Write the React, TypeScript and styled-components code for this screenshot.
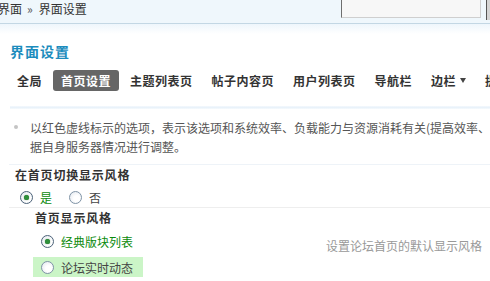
import React from "react";
import styled, { createGlobalStyle, css } from "styled-components";

const GlobalStyle = createGlobalStyle`
  html, body {
    margin: 0;
    padding: 0;
    background: #fff;
    overflow: hidden;
  }
  body {
    font-family: "Noto Sans CJK SC", "Liberation Sans", sans-serif;
    font-size: 12px;
    color: #333;
  }
`;

const Page = styled.div`
  width: 640px;
`;

const TopBar = styled.div`
  height: 23px;
  display: grid;
  grid-template-columns: 341px 140px 5px 1fr;
  background: #eff7fc;
  border-bottom: 1px solid #c3d7e4;
`;

const Breadcrumb = styled.div`
  margin-left: -2px;
  line-height: 17px;
  color: #333;
  white-space: nowrap;
`;

const CrumbSep = styled.span`
  margin: 0 6px 0 5px;
  color: #555;
`;

const SearchBox = styled.div`
  height: 18px;
  box-sizing: border-box;
  background: #f7f7f7;
  border: 1px solid #cfcfcf;
  border-top: none;
  border-left: 1px solid #6e6e6e;
`;

const SideButton = styled.div`
  grid-column: 4;
  height: 20px;
  background: #d4d4d4;
  border-left: 1px solid #555;
`;

const TopShade = styled.div`
  height: 10px;
  background: linear-gradient(#eef6fc, #ffffff);
`;

const Main = styled.div`
  padding: 0 0 0 9px;
`;

const Title = styled.h3`
  margin: 7px 0 0 1px;
  font-size: 14px;
  line-height: 20px;
  font-weight: bold;
  letter-spacing: 1px;
  color: #1c8cbd;
`;

const Tabs = styled.div`
  display: flex;
  margin-top: 9px;
  white-space: nowrap;
`;

const Tab = styled.span<{ $active?: boolean }>`
  display: inline-flex;
  align-items: center;
  height: 21px;
  padding: 0 8px;
  margin-right: 3px;
  border-radius: 3px;
  font-weight: bold;
  letter-spacing: 0.5px;
  color: #333;
  ${(p) =>
    p.$active &&
    css`
      background: #666;
      color: #fff;
    `}
`;

const Caret = styled.span`
  display: inline-block;
  width: 0;
  height: 0;
  margin-left: 4px;
  border-left: 3px solid transparent;
  border-right: 3px solid transparent;
  border-top: 5px solid #444;
`;

const Band = styled.div`
  margin: 15px 0 0 1px;
  height: 3px;
  background: linear-gradient(#f4f9fd, #e9f2fa, #f6fafd);
`;

const TipList = styled.ul`
  list-style: none;
  margin: 0;
  padding: 9px 0 0 0;
`;

const TipItem = styled.li`
  position: relative;
  padding-left: 21px;
  line-height: 19px;
  color: #555;
  white-space: nowrap;
  &::before {
    content: "";
    position: absolute;
    left: 5px;
    top: 7px;
    width: 4px;
    height: 4px;
    border-radius: 50%;
    background: #c4c4c4;
  }
`;

const Divider = styled.div<{ $color?: string }>`
  margin-top: 8px;
  height: 1px;
  background: ${(p) => p.$color || "#eef3f8"};
`;

const SectionHead = styled.div<{ $indent: number }>`
  padding-left: ${(p) => p.$indent}px;
  line-height: 20px;
  font-weight: bold;
  letter-spacing: 0.8px;
  color: #333;
`;

const RadioRow = styled.div`
  display: flex;
  align-items: center;
  height: 20px;
  padding: 2px 0 0 11px;
  border-bottom: 1px solid #eee;
`;

const RadioLabel = styled.label<{ $checked?: boolean; $hl?: boolean }>`
  display: inline-flex;
  align-items: center;
  gap: 7px;
  height: 20px;
  color: ${(p) => (p.$checked ? "#0b8a0b" : "#444")};
  ${(p) =>
    p.$hl &&
    css`
      background: #cbf5c7;
    `}
`;

const RadioDot = styled.span<{ $checked?: boolean }>`
  position: relative;
  width: 11px;
  height: 11px;
  border-radius: 50%;
  border: 1px solid #7f93a6;
  background: radial-gradient(circle at 60% 60%, #ffffff 30%, #dfe5ec 100%);
  ${(p) =>
    p.$checked &&
    css`
      border-color: #4d6379;
      &::after {
        content: "";
        position: absolute;
        left: 3px;
        top: 3px;
        width: 5px;
        height: 5px;
        border-radius: 50%;
        background: #2f8f3a;
        box-shadow: 0 0 1px #1b5e24;
      }
    `}
`;

const YesNo = styled.div`
  display: flex;
  gap: 17px;
`;

const StyleBlock = styled.div`
  display: grid;
  grid-template-columns: 317px 1fr;
  margin-top: 3px;
`;

const OptionCol = styled.div`
  display: flex;
  flex-direction: column;
  gap: 6px;
  padding-left: 24px;
  align-items: flex-start;
`;

const Option = styled(RadioLabel)`
  width: 102px;
  padding-left: 8px;
`;

const Desc = styled.div`
  padding-top: 5px;
  line-height: 20px;
  color: #999;
  white-space: nowrap;
`;

export default function App() {
  return (
    <Page>
      <GlobalStyle />
      <TopBar>
        <Breadcrumb>
          界面<CrumbSep>»</CrumbSep>界面设置
        </Breadcrumb>
        <SearchBox />
        <div />
        <SideButton />
      </TopBar>
      <TopShade />
      <Main>
        <Title>界面设置</Title>
        <Tabs>
          <Tab>全局</Tab>
          <Tab $active>首页设置</Tab>
          <Tab>主题列表页</Tab>
          <Tab>帖子内容页</Tab>
          <Tab>用户列表页</Tab>
          <Tab>导航栏</Tab>
          <Tab>
            边栏<Caret />
          </Tab>
          <Tab>提示信息</Tab>
        </Tabs>
        <Band />
        <TipList>
          <TipItem>
            以红色虚线标示的选项，表示该选项和系统效率、负载能力与资源消耗有关(提高效率、或降低效率)，建议依
            <br />
            据自身服务器情况进行调整。
          </TipItem>
        </TipList>
        <Divider />
        <SectionHead $indent={6}>在首页切换显示风格</SectionHead>
        <RadioRow>
          <YesNo>
            <RadioLabel $checked>
              <RadioDot $checked />是
            </RadioLabel>
            <RadioLabel>
              <RadioDot />否
            </RadioLabel>
          </YesNo>
        </RadioRow>
        <SectionHead $indent={26}>首页显示风格</SectionHead>
        <StyleBlock>
          <OptionCol>
            <Option $checked>
              <RadioDot $checked />经典版块列表
            </Option>
            <Option $hl>
              <RadioDot />论坛实时动态
            </Option>
          </OptionCol>
          <Desc>设置论坛首页的默认显示风格</Desc>
        </StyleBlock>
      </Main>
    </Page>
  );
}
